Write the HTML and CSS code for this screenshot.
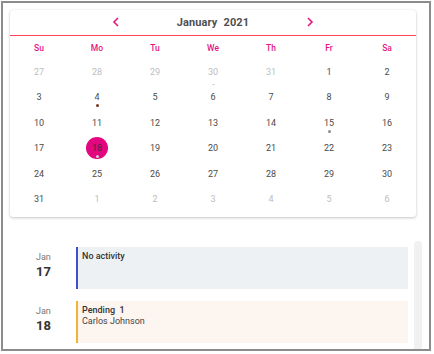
FILE: index.html
```html
<!DOCTYPE html>
<html>
<head>
<meta charset="utf-8">
<link rel="stylesheet" href="styles.css">
</head>
<body>
<div class="frame">
  <div class="card">
    <div class="cal-head">
      <svg class="chev" width="8" height="10" viewBox="0 0 8 10"><path d="M6 1 L2 5 L6 9" fill="none" stroke="#e4167f" stroke-width="1.6"/></svg>
      <div class="title"><span>January</span><span>2021</span></div>
      <svg class="chev" width="8" height="10" viewBox="0 0 8 10"><path d="M2 1 L6 5 L2 9" fill="none" stroke="#e4167f" stroke-width="1.6"/></svg>
    </div>
    <div class="dow">
      <span>Su</span><span>Mo</span><span>Tu</span><span>We</span><span>Th</span><span>Fr</span><span>Sa</span>
    </div>
    <div class="days">
      <div class="d other"><span class="n">27</span><i class="dot"></i></div>
      <div class="d other"><span class="n">28</span><i class="dot"></i></div>
      <div class="d other"><span class="n">29</span><i class="dot"></i></div>
      <div class="d other"><span class="n">30</span><i class="dot dot-faint"></i></div>
      <div class="d other"><span class="n">31</span><i class="dot"></i></div>
      <div class="d"><span class="n">1</span><i class="dot"></i></div>
      <div class="d"><span class="n">2</span><i class="dot"></i></div>

      <div class="d"><span class="n">3</span><i class="dot"></i></div>
      <div class="d"><span class="n">4</span><i class="dot dot-brown"></i></div>
      <div class="d"><span class="n">5</span><i class="dot"></i></div>
      <div class="d"><span class="n">6</span><i class="dot"></i></div>
      <div class="d"><span class="n">7</span><i class="dot"></i></div>
      <div class="d"><span class="n">8</span><i class="dot"></i></div>
      <div class="d"><span class="n">9</span><i class="dot"></i></div>

      <div class="d"><span class="n">10</span><i class="dot"></i></div>
      <div class="d"><span class="n">11</span><i class="dot"></i></div>
      <div class="d"><span class="n">12</span><i class="dot"></i></div>
      <div class="d"><span class="n">13</span><i class="dot"></i></div>
      <div class="d"><span class="n">14</span><i class="dot"></i></div>
      <div class="d"><span class="n">15</span><i class="dot dot-grey"></i></div>
      <div class="d"><span class="n">16</span><i class="dot"></i></div>

      <div class="d"><span class="n">17</span><i class="dot"></i></div>
      <div class="d sel"><span class="n">18</span><i class="dot dot-light"></i></div>
      <div class="d"><span class="n">19</span><i class="dot"></i></div>
      <div class="d"><span class="n">20</span><i class="dot"></i></div>
      <div class="d"><span class="n">21</span><i class="dot"></i></div>
      <div class="d"><span class="n">22</span><i class="dot"></i></div>
      <div class="d"><span class="n">23</span><i class="dot"></i></div>

      <div class="d"><span class="n">24</span><i class="dot"></i></div>
      <div class="d"><span class="n">25</span><i class="dot"></i></div>
      <div class="d"><span class="n">26</span><i class="dot"></i></div>
      <div class="d"><span class="n">27</span><i class="dot"></i></div>
      <div class="d"><span class="n">28</span><i class="dot"></i></div>
      <div class="d"><span class="n">29</span><i class="dot"></i></div>
      <div class="d"><span class="n">30</span><i class="dot"></i></div>

      <div class="d"><span class="n">31</span><i class="dot"></i></div>
      <div class="d other"><span class="n">1</span><i class="dot"></i></div>
      <div class="d other"><span class="n">2</span><i class="dot"></i></div>
      <div class="d other"><span class="n">3</span><i class="dot"></i></div>
      <div class="d other"><span class="n">4</span><i class="dot"></i></div>
      <div class="d other"><span class="n">5</span><i class="dot"></i></div>
      <div class="d other"><span class="n">6</span><i class="dot"></i></div>
    </div>
  </div>

  <div class="list-wrap">
    <div class="list">
      <div class="entry">
        <div class="date"><div class="mon">Jan</div><div class="num">17</div></div>
        <div class="event ev-none">
          <div class="ev-title">No activity</div>
        </div>
      </div>
      <div class="entry">
        <div class="date"><div class="mon">Jan</div><div class="num">18</div></div>
        <div class="event ev-pending">
          <div class="ev-title">Pending&nbsp; 1</div>
          <div class="ev-sub">Carlos Johnson</div>
        </div>
      </div>
    </div>
    <div class="scroll"></div>
  </div>
</div>
</body>
</html>
```
FILE: styles.css
```css
html, body {
  margin: 0;
  padding: 0;
  background: #ffffff;
}
body {
  font-family: Roboto, "Liberation Sans", Arial, sans-serif;
  color: #444;
}
.frame {
  margin: 1px;
  width: 430px;
  height: 350px;
  box-sizing: border-box;
  border: 2px solid #8c8c8c;
  padding: 7px 7px 0 7px;
  display: flex;
  flex-direction: column;
  overflow: hidden;
}
.card {
  width: 406px;
  background: #fff;
  border-radius: 3px;
  box-shadow: 0 1px 3px rgba(0,0,0,0.22), 0 0 1px rgba(0,0,0,0.12);
  padding-bottom: 6px;
  flex: none;
}
.cal-head {
  height: 25px;
  border-bottom: 1px solid #ff4459;
  display: flex;
  align-items: center;
  justify-content: center;
  gap: 57px;
}
.chev {
  display: block;
  margin-top: -1px;
}
.title {
  display: flex;
  gap: 6px;
  font-size: 11px;
  font-weight: 700;
  color: #505050;
  letter-spacing: 0.1px;
}
.dow {
  height: 23px;
  display: grid;
  grid-template-columns: repeat(7, 58px);
  align-items: center;
  justify-items: center;
  font-size: 8.5px;
  font-weight: 500;
  color: #e4167f;
}
.days {
  display: grid;
  grid-template-columns: repeat(7, 58px);
  grid-auto-rows: 25.4px;
}
.d {
  display: flex;
  flex-direction: column;
  align-items: center;
  padding-top: 2px;
  font-size: 9px;
  color: #4a4a4a;
}
.d .n {
  width: 22px;
  height: 22px;
  line-height: 22px;
  text-align: center;
  border-radius: 50%;
  flex: none;
}
.d.other {
  color: #bdbdbd;
}
.d.sel .n {
  background: #e2077f;
  color: #5a2040;
}
.dot {
  display: block;
  width: 3px;
  height: 3px;
  border-radius: 50%;
  margin-top: -4px;
  background: transparent;
}
.dot-faint {
  background: #e9c9c6;
  margin-top: 1px;
}
.dot-brown {
  background: #7a3418;
}
.dot-grey {
  background: #8d8d8d;
}
.dot-light {
  background: #d2d2d2;
}
.list-wrap {
  margin-top: 24px;
  flex: 1;
  display: flex;
  min-height: 0;
}
.list {
  flex: 1;
  padding-top: 6px;
  display: flex;
  flex-direction: column;
  gap: 12px;
  margin-right: 6px;
}
.entry {
  display: flex;
}
.date {
  width: 66px;
  box-sizing: border-box;
  padding-left: 26px;
  padding-top: 5px;
  flex: none;
}
.mon {
  font-size: 9px;
  color: #777;
  line-height: 11px;
}
.num {
  font-size: 13px;
  font-weight: 700;
  color: #333;
  line-height: 16px;
  margin-top: 1px;
}
.event {
  flex: 1;
  height: 42px;
  box-sizing: border-box;
  padding: 4px 6px 0 4px;
  font-size: 9px;
  line-height: 11px;
  color: #333;
}
.ev-none {
  background: #eef1f4;
  border-left: 2px solid #3c4fd0;
}
.ev-pending {
  background: #fdf5ef;
  border-left: 2px solid #f2b233;
}
.ev-title {
  font-weight: 500;
  color: #333;
}
.ev-sub {
  color: #444;
}
.scroll {
  width: 8px;
  flex: none;
  background: #f1f1f1;
  border-radius: 4px 4px 0 0;
}
```
